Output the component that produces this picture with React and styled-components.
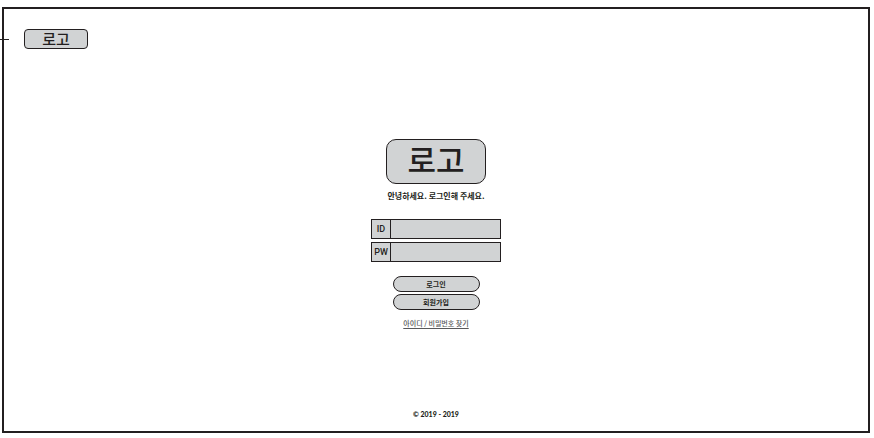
import React from "react";
import styled, { createGlobalStyle } from "styled-components";

const INK = "#231f20";
const FILL = "#d1d3d4";

const GlobalStyle = createGlobalStyle`
  *, *::before, *::after { box-sizing: border-box; }
  body {
    margin: 0;
    background: #fff;
    color: ${INK};
    font-family: "Noto Sans CJK KR", sans-serif;
  }
`;

const Page = styled.div`
  display: flex;
  min-height: 100vh;
  padding: 7px 4px 5px 2px;
`;

const Frame = styled.div`
  flex: 1;
  display: flex;
  flex-direction: column;
  border: 2px solid ${INK};
`;

const Header = styled.header`
  position: relative;
  padding: 20px 20px 0;

  /* annotation leader crossing the frame edge */
  &::before {
    content: "";
    position: absolute;
    left: -4px;
    top: 30px;
    width: 9px;
    height: 1px;
    background: ${INK};
  }
`;

const HomeLink = styled.a`
  display: block;
  width: fit-content;
  color: inherit;
  text-decoration: none;
`;

const Logo = styled.div`
  display: flex;
  align-items: center;
  justify-content: center;
  width: ${(p) => (p.$large ? 100 : 64)}px;
  height: ${(p) => (p.$large ? 45 : 20)}px;
  padding-bottom: ${(p) => (p.$large ? 5 : 2)}px;
  border: 1px solid ${INK};
  border-radius: ${(p) => (p.$large ? 10 : 4)}px;
  background: ${FILL};
  font-size: ${(p) => (p.$large ? 31 : 15)}px;
  font-weight: 500;
  line-height: 1;
`;

const Main = styled.main`
  flex: 1;
  display: flex;
  flex-direction: column;
  align-items: center;
  justify-content: center;
  padding-top: 10px;
`;

const Greeting = styled.h1`
  margin: 4px 0 15px;
  font-size: 8px;
  line-height: 16px;
  font-weight: 700;
`;

const LoginForm = styled.form`
  display: flex;
  flex-direction: column;
  align-items: center;
`;

const Fields = styled.div`
  display: grid;
  gap: 3px;
  margin-bottom: 14px;
`;

const Field = styled.label`
  display: grid;
  grid-template-columns: 18px 110px;
  height: 20px;
  border: 1px solid ${INK};
  background: ${FILL};
`;

const FieldName = styled.span`
  font-family: Roboto, sans-serif;
  font-size: 9px;
  line-height: 18px;
  font-weight: 500;
  text-align: center;
`;

const FieldInput = styled.input`
  min-width: 0;
  padding: 0 4px;
  border: 0;
  border-left: 1px solid ${INK};
  border-radius: 0;
  background: transparent;
  color: inherit;
  font: inherit;
  font-size: 9px;
`;

const Actions = styled.div`
  display: grid;
  gap: 2px;
`;

const PillButton = styled.button`
  display: flex;
  align-items: center;
  justify-content: center;
  width: 87px;
  height: 16px;
  padding: 0;
  border: 1px solid ${INK};
  border-radius: 8px;
  background: ${FILL};
  color: inherit;
  font: inherit;
  font-size: 7px;
  font-weight: 700;
  line-height: 14px;
`;

const RecoverLink = styled.a`
  margin-top: 7px;
  color: #58595b;
  font-size: 7px;
  font-weight: 500;
  line-height: 12px;
  text-underline-offset: 2px;
`;

const Footer = styled.footer`
  padding-bottom: 11px;
  font-family: Lato, sans-serif;
  font-size: 7px;
  font-weight: 900;
  line-height: 12px;
  text-align: center;
`;

export default function App() {
  return (
    <Page>
      <GlobalStyle />
      <Frame>
        <Header>
          <HomeLink href="#">
            <Logo>로고</Logo>
          </HomeLink>
        </Header>
        <Main>
          <Logo $large>로고</Logo>
          <Greeting>안녕하세요. 로그인해 주세요.</Greeting>
          <LoginForm onSubmit={(e) => e.preventDefault()}>
            <Fields>
              <Field htmlFor="login-id">
                <FieldName>ID</FieldName>
                <FieldInput id="login-id" type="text" autoComplete="username" />
              </Field>
              <Field htmlFor="login-pw">
                <FieldName>PW</FieldName>
                <FieldInput id="login-pw" type="password" autoComplete="current-password" />
              </Field>
            </Fields>
            <Actions>
              <PillButton type="submit">로그인</PillButton>
              <PillButton type="button">회원가입</PillButton>
            </Actions>
          </LoginForm>
          <RecoverLink href="#">아이디 / 비밀번호 찾기</RecoverLink>
        </Main>
        <Footer>© 2019 - 2019</Footer>
      </Frame>
    </Page>
  );
}
